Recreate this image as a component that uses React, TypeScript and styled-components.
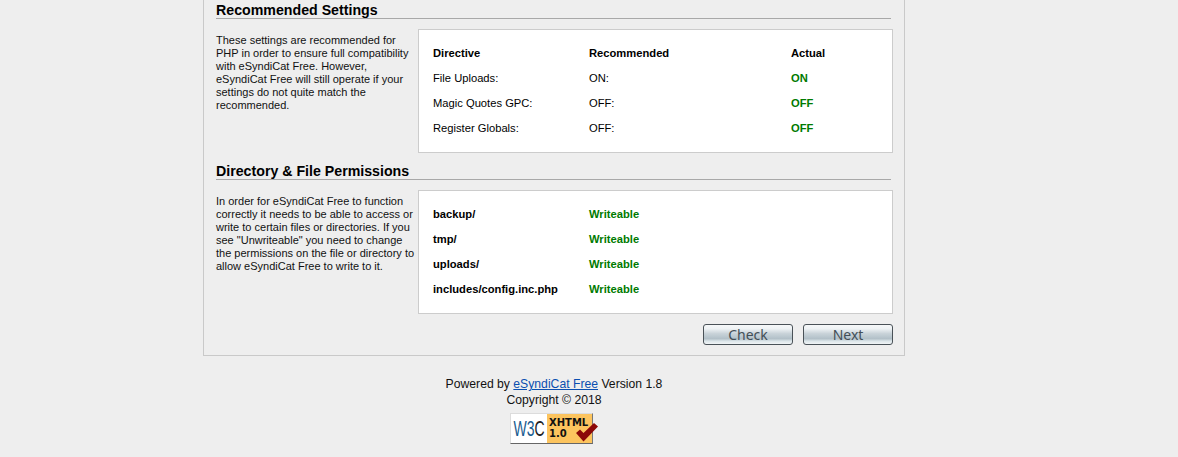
import React from "react";
import styled, { createGlobalStyle } from "styled-components";

const Global = createGlobalStyle`
  html, body { margin: 0; padding: 0; background: #eeeeee; }
  body { font-family: "Liberation Sans", Arial, sans-serif; color: #000; overflow: hidden; }
`;

const Page = styled.div`
  width: 1108px;
  height: 457px;
  overflow: hidden;
`;

const Panel = styled.main`
  box-sizing: border-box;
  width: 702px;
  height: 356px;
  margin: 0 auto;
  padding: 0 11px 0 12px;
  border: 1px solid #c9c9c9;
  border-top: 0;
  display: flex;
  flex-direction: column;
`;

const Heading = styled.h2`
  box-sizing: border-box;
  margin: 0;
  width: 675px;
  height: 19px;
  padding-top: 1px;
  font-size: 14.2px;
  line-height: 18px;
  font-weight: bold;
  border-bottom: 1px solid #a8a8a8;
`;

const Section = styled.section`
  display: flex;
  margin-top: 10px;
  margin-bottom: 8px;
`;

const Intro = styled.p`
  flex: none;
  width: 202px;
  margin: 0;
  padding-top: 5px;
  font-size: 11px;
  line-height: 13px;
  color: #111;
`;

const Box = styled.div`
  flex: none;
  box-sizing: border-box;
  width: 475px;
  height: 124px;
  padding: 11px 14px;
  background: #fff;
  border: 1px solid #cccccc;
`;

const Table = styled.table`
  border-collapse: collapse;
  table-layout: fixed;
  width: 445px;
  margin-top: -1px;
  font-size: 11.2px;
`;

const Row = styled.tr`
  height: 25px;
`;

const Cell = styled.td<{ $w?: number; $bold?: boolean; $ok?: boolean }>`
  padding: 0;
  width: ${(p) => (p.$w ? `${p.$w}px` : "auto")};
  font-weight: ${(p) => (p.$bold || p.$ok ? "bold" : "normal")};
  color: ${(p) => (p.$ok ? "#007a00" : "#000")};
`;

const Actions = styled.div`
  display: flex;
  justify-content: flex-end;
  gap: 10px;
  width: 677px;
  margin-top: 2px;
`;

const Button = styled.button`
  box-sizing: border-box;
  width: 90px;
  height: 21px;
  padding: 1px 0 0;
  border: 1px solid #4a5258;
  border-radius: 3px;
  font-family: "Noto Sans", sans-serif;
  font-size: 14px;
  line-height: 18px;
  color: #434f57;
  background: linear-gradient(
    to bottom,
    #f6f8f9 0%,
    #eef2f4 20%,
    #c9d3d9 45%,
    #b2c0c8 72%,
    #dde6ea 85%,
    #f0f4f6 100%
  );
`;

const Footer = styled.footer`
  margin-top: 20px;
  text-align: center;
  font-size: 12.2px;
  line-height: 16px;
  color: #111;
`;

const Line = styled.div``;

const Link = styled.a`
  color: #0a4fb0;
  text-decoration: underline;
`;

const Badge = styled.div`
  position: relative;
  box-sizing: border-box;
  width: 88px;
  height: 31px;
  margin: 5px auto 0;
  padding-right: 5px;
  text-align: left;
`;

const BadgeFace = styled.div`
  box-sizing: border-box;
  height: 31px;
  display: flex;
  background: #fff;
  border: 1px solid;
  border-color: #dcdcdc #777 #666 #dcdcdc;
`;

const BadgeLogo = styled.svg`
  display: block;
  flex: none;
  width: 36px;
  height: 29px;
`;

const BadgeTag = styled.div`
  flex: 1;
  background: #fcc45e;
  padding: 3px 0 0 2px;
  font-family: "DejaVu Sans", sans-serif;
  font-size: 10px;
  font-weight: bold;
  line-height: 11px;
  color: #111;
`;

const BadgeCheck = styled.svg`
  position: absolute;
  left: 66px;
  top: 9px;
  width: 22px;
  height: 20px;
`;

const settings = [
  ["File Uploads:", "ON:", "ON"],
  ["Magic Quotes GPC:", "OFF:", "OFF"],
  ["Register Globals:", "OFF:", "OFF"],
];

const paths = ["backup/", "tmp/", "uploads/", "includes/config.inc.php"];

export default function App() {
  return (
    <Page>
      <Global />
      <Panel>
        <Heading>Recommended Settings</Heading>
        <Section>
          <Intro>
            These settings are recommended for PHP in order to ensure full compatibility with
            eSyndiCat Free. However, eSyndiCat Free will still operate if your settings do not
            quite match the recommended.
          </Intro>
          <Box>
            <Table>
              <tbody>
                <Row>
                  <Cell $w={156} $bold>Directive</Cell>
                  <Cell $w={202} $bold>Recommended</Cell>
                  <Cell $bold>Actual</Cell>
                </Row>
                {settings.map(([name, rec, actual]) => (
                  <Row key={name}>
                    <Cell>{name}</Cell>
                    <Cell>{rec}</Cell>
                    <Cell $ok>{actual}</Cell>
                  </Row>
                ))}
              </tbody>
            </Table>
          </Box>
        </Section>
        <Heading>Directory &amp; File Permissions</Heading>
        <Section>
          <Intro>
            In order for eSyndiCat Free to function correctly it needs to be able to access or
            write to certain files or directories. If you see "Unwriteable" you need to change
            the permissions on the file or directory to allow eSyndiCat Free to write to it.
          </Intro>
          <Box>
            <Table>
              <tbody>
                {paths.map((p) => (
                  <Row key={p}>
                    <Cell $w={156} $bold>{p}</Cell>
                    <Cell $w={202} $ok>Writeable</Cell>
                    <Cell />
                  </Row>
                ))}
              </tbody>
            </Table>
          </Box>
        </Section>
        <Actions>
          <Button type="button">Check</Button>
          <Button type="button">Next</Button>
        </Actions>
      </Panel>
      <Footer>
        <Line>
          Powered by <Link href="#">eSyndiCat Free</Link> Version 1.8
        </Line>
        <Line>Copyright © 2018</Line>
        <Badge>
          <BadgeFace>
            <BadgeLogo viewBox="0 0 36 29" aria-label="W3C">
              <text
                transform="translate(2.5 22) scale(1 1.55)"
                fontFamily="'Liberation Sans', sans-serif"
                fontSize="14"
                fill="#1a5c8f"
              >
                W3
                <tspan fill="#222">C</tspan>
              </text>
            </BadgeLogo>
            <BadgeTag>
              XHTML
              <br />
              1.0
            </BadgeTag>
          </BadgeFace>
          <BadgeCheck viewBox="0 0 22 20">
            <path d="M0 11 L4 7.5 L7.5 11 L18 1 L22 4.5 L7.5 19.5 Z" fill="#8c0808" />
          </BadgeCheck>
        </Badge>
      </Footer>
    </Page>
  );
}
